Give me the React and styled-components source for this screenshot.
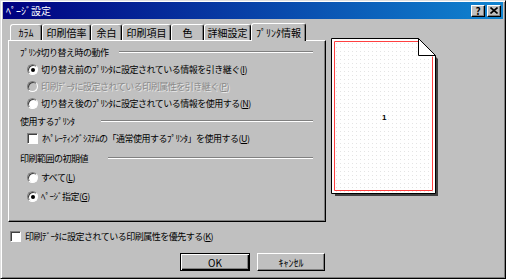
import React from 'react';
import styled, { createGlobalStyle } from 'styled-components';

const Global = createGlobalStyle`
	body {
		margin: 0;
		background: #c0c0c0;
		font-family: "Noto Sans CJK JP", "Noto Sans", sans-serif;
	}
`;

const Dialog = styled.div`
	width: 506px;
	height: 279px;
	box-sizing: border-box;
	background: #c0c0c0;
	border: 1px solid;
	border-color: #dfdfdf #000 #000 #dfdfdf;
	box-shadow: inset 1px 1px #fff, inset -1px -1px #808080;
	padding: 1px 2px 2px;
	display: flex;
	flex-direction: column;
	font-size: 9px;
	letter-spacing: -0.5px;
	color: #000;
`;

const TitleBar = styled.div`
	height: 17px;
	display: flex;
	align-items: center;
	padding: 0 2px 0 3px;
	background: linear-gradient(90deg, #000080, #1084d0);
	color: #fff;
	font-size: 10px;
	letter-spacing: 0;
`;

const TitleText = styled.div`
	flex: 1;
`;

const TitleButton = styled.div`
	width: 14px;
	height: 12px;
	box-sizing: border-box;
	margin-left: ${p => p.$gap || 0}px;
	background: #c0c0c0;
	border: 1px solid;
	border-color: #fff #000 #000 #fff;
	box-shadow: inset -1px -1px #808080;
	display: flex;
	align-items: center;
	justify-content: center;
	color: #000;
	font-weight: bold;
	font-size: 10px;
	line-height: 1;
`;

const Main = styled.div`
	display: flex;
	margin: 4px 0 0 5px;
`;

const LeftColumn = styled.div`
	width: 318px;
	display: flex;
	flex-direction: column;
`;

const TabStrip = styled.div`
	height: 17px;
	display: flex;
	align-items: flex-end;
	padding-left: 2px;
	font-size: 10px;
	letter-spacing: 0;
`;

const Tab = styled.div`
	box-sizing: border-box;
	width: ${p => p.$w}px;
	height: ${p => (p.$active ? 18 : 16)}px;
	margin-bottom: ${p => (p.$active ? -1 : 0)}px;
	background: #c0c0c0;
	border: 1px solid;
	border-bottom: none;
	border-color: #fff #000 transparent #fff;
	border-radius: 3px 3px 0 0;
	box-shadow: inset -1px 0 #808080;
	display: flex;
	align-items: center;
	justify-content: center;
	white-space: nowrap;
	position: relative;
	z-index: ${p => (p.$active ? 1 : 0)};
`;

const Panel = styled.div`
	box-sizing: border-box;
	height: 182px;
	border: 1px solid;
	border-color: #fff #000 #000 #fff;
	box-shadow: inset -1px -1px #808080;
	padding: 2px 12px 0 11px;
`;

const GroupHeader = styled.div`
	height: 18px;
	display: flex;
	align-items: center;
	white-space: nowrap;
	&::after {
		content: '';
		flex: 1;
		margin-left: ${p => p.$line || 16}px;
		border-top: 1px solid #808080;
		border-bottom: 1px solid #fff;
	}
`;

const OptionList = styled.div`
	display: flex;
	flex-direction: column;
	gap: ${p => p.$gap || 0}px;
	padding-top: ${p => p.$gap || 0}px;
	margin-bottom: ${p => p.$after || 0}px;
`;

const Row = styled.div`
	height: 17px;
	display: flex;
	align-items: center;
	padding-left: 7px;
	white-space: nowrap;
	color: ${p => (p.$disabled ? '#8a8a8a' : '#000')};
	text-shadow: ${p => (p.$disabled ? '1px 1px #e8e8e8' : 'none')};
`;

const Radio = styled.span`
	width: 11px;
	height: 11px;
	box-sizing: border-box;
	margin-right: 3px;
	border-radius: 50%;
	border: 1px solid;
	border-color: #808080 #fff #fff #808080;
	box-shadow: inset 1px 1px #404040;
	background: ${p => (p.$disabled ? '#c0c0c0' : '#fff')};
	display: flex;
	align-items: center;
	justify-content: center;
	&::after {
		content: '';
		width: 4px;
		height: 4px;
		border-radius: 50%;
		background: #000;
		display: ${p => (p.$checked ? 'block' : 'none')};
	}
`;

const Check = styled.span`
	width: 11px;
	height: 11px;
	box-sizing: border-box;
	margin-right: 4px;
	border: 1px solid;
	border-color: #808080 #fff #fff #808080;
	box-shadow: inset 1px 1px #404040;
	background: #fff;
`;

const Preview = styled.svg`
	margin: 15px 0 0 5px;
	flex-shrink: 0;
`;

const BottomRow = styled.div`
	height: 16px;
	margin-top: 6px;
	display: flex;
	align-items: center;
	padding-left: 7px;
	white-space: nowrap;
`;

const ButtonRow = styled.div`
	display: flex;
	gap: 7px;
	margin-top: 9px;
	padding-left: 177px;
	font-size: 10px;
	letter-spacing: 0;
`;

const Button = styled.div`
	width: ${p => p.$w}px;
	height: 18px;
	box-sizing: border-box;
	background: #c0c0c0;
	border: 1px solid;
	border-color: ${p => (p.$default ? '#000' : '#fff #000 #000 #fff')};
	box-shadow: ${p =>
		p.$default
			? 'inset 1px 1px #fff, inset -1px -1px #000, inset -2px -2px #808080'
			: 'inset -1px -1px #808080'};
	display: flex;
	align-items: center;
	justify-content: center;
`;

const tabs = [
	{ label: 'ｶﾗﾑ', w: 32 },
	{ label: '印刷倍率', w: 49 },
	{ label: '余白', w: 31 },
	{ label: '印刷項目', w: 49 },
	{ label: '色', w: 33 },
	{ label: '詳細設定', w: 47 },
	{ label: 'ﾌﾟﾘﾝﾀ情報', w: 55, active: true },
];

const PagePreview = () => (
	<Preview width="108" height="160" viewBox="0 0 108 160">
		<defs>
			<pattern id="dots" width="4" height="4" patternUnits="userSpaceOnUse">
				<rect x="1" y="1" width="1" height="1" fill="#e4e4e4" />
			</pattern>
		</defs>
		<path d="M4 4 H90 L107 21 V158 H4 Z" fill="#404040" />
		<path d="M0.5 0.5 H87.5 L104.5 17.5 V155.5 H0.5 Z" fill="#fff" stroke="#000" />
		<path d="M2 2 H87 L103 18 V154 H2 Z" fill="url(#dots)" />
		<path d="M3.5 152.5 V3.5 H87.5 M101.5 18.5 V152.5 H3.5" fill="none" stroke="#ff4040" />
		<path d="M87.5 0.5 V17.5 H104.5 Z" fill="#fff" stroke="#000" />
		<text x="53" y="82" fontSize="8" fontWeight="bold" textAnchor="middle" fontFamily="Liberation Sans, sans-serif">1</text>
	</Preview>
);

const App = () => (
	<>
		<Global />
		<Dialog>
			<TitleBar>
				<TitleText>ﾍﾟｰｼﾞ設定</TitleText>
				<TitleButton>?</TitleButton>
				<TitleButton $gap={2}>
					<svg width="8" height="7" viewBox="0 0 8 7">
						<path d="M0.5 0.5 L7.5 6.5 M7.5 0.5 L0.5 6.5" stroke="#000" strokeWidth="1.6" />
					</svg>
				</TitleButton>
			</TitleBar>
			<Main>
				<LeftColumn>
					<TabStrip>
						{tabs.map(t => (
							<Tab key={t.label} $w={t.w} $active={t.active}>
								{t.label}
							</Tab>
						))}
					</TabStrip>
					<Panel>
						<GroupHeader $line={10}>ﾌﾟﾘﾝﾀ切り替え時の動作</GroupHeader>
						<OptionList>
							<Row>
								<Radio $checked />
								<span>切り替え前のﾌﾟﾘﾝﾀに設定されている情報を引き継ぐ(<u>I</u>)</span>
							</Row>
							<Row $disabled>
								<Radio $disabled />
								<span>印刷ﾃﾞｰﾀに設定されている印刷属性を引き継ぐ(<u>P</u>)</span>
							</Row>
							<Row>
								<Radio />
								<span>切り替え後のﾌﾟﾘﾝﾀに設定されている情報を使用する(<u>N</u>)</span>
							</Row>
						</OptionList>
						<GroupHeader $line={26}>使用するﾌﾟﾘﾝﾀ</GroupHeader>
						<OptionList $after={2}>
							<Row>
								<Check />
								<span>ｵﾍﾟﾚｰﾃｨﾝｸﾞｼｽﾃﾑの「通常使用するﾌﾟﾘﾝﾀ」を使用する(<u>U</u>)</span>
							</Row>
						</OptionList>
						<GroupHeader $line={20}>印刷範囲の初期値</GroupHeader>
						<OptionList $gap={2}>
							<Row>
								<Radio />
								<span>すべて(<u>L</u>)</span>
							</Row>
							<Row>
								<Radio $checked />
								<span>ﾍﾟｰｼﾞ指定(<u>G</u>)</span>
							</Row>
						</OptionList>
					</Panel>
				</LeftColumn>
				<PagePreview />
			</Main>
			<BottomRow>
				<Check />
				<span>印刷ﾃﾞｰﾀに設定されている印刷属性を優先する(<u>K</u>)</span>
			</BottomRow>
			<ButtonRow>
				<Button $w={70} $default>OK</Button>
				<Button $w={68}>ｷｬﾝｾﾙ</Button>
			</ButtonRow>
		</Dialog>
	</>
);

export default App;
